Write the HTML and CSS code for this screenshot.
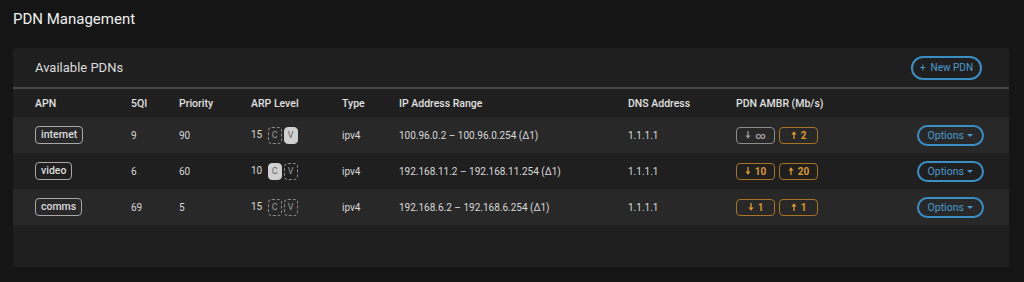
FILE: index.html
```html
<!DOCTYPE html>
<html lang="en">
<head>
    <meta charset="UTF-8">
    <meta name="viewport" content="width=device-width, initial-scale=1.0">
    <title>PDN Management</title>
    <link rel="stylesheet" href="styles.css">
</head>
<body>
    <h1 class="page-title">PDN Management</h1>

    <div class="card">
        <div class="card-header">
            <h2>Available PDNs</h2>
            <button class="btn-outline">+&nbsp; New PDN</button>
        </div>

        <table class="pdn-table">
            <thead>
                <tr>
                    <th class="col-apn">APN</th>
                    <th class="col-qi">5QI</th>
                    <th class="col-prio">Priority</th>
                    <th class="col-arp">ARP Level</th>
                    <th class="col-type">Type</th>
                    <th class="col-ip">IP Address Range</th>
                    <th class="col-dns">DNS Address</th>
                    <th class="col-ambr">PDN AMBR (Mb/s)</th>
                    <th></th>
                </tr>
            </thead>
            <tbody>
                <tr>
                    <td><span class="apn">internet</span></td>
                    <td>9</td>
                    <td>90</td>
                    <td>
                        <span class="arp">15</span>
                        <span class="flag">C</span><span class="flag on">V</span>
                    </td>
                    <td>ipv4</td>
                    <td>100.96.0.2 – 100.96.0.254 (Δ1)</td>
                    <td>1.1.1.1</td>
                    <td>
                        <span class="rate"><svg class="arrow" viewBox="0 0 6 8"><path d="M3 0v5"/><polygon points="0.4,4.4 5.6,4.4 3,7.8"/></svg>∞</span><span class="rate set"><svg class="arrow" viewBox="0 0 6 8"><path d="M3 8V3"/><polygon points="0.4,3.6 5.6,3.6 3,0.2"/></svg>2</span>
                    </td>
                    <td class="actions"><button class="btn-outline small">Options <span class="caret"></span></button></td>
                </tr>
                <tr>
                    <td><span class="apn">video</span></td>
                    <td>6</td>
                    <td>60</td>
                    <td>
                        <span class="arp">10</span>
                        <span class="flag on">C</span><span class="flag">V</span>
                    </td>
                    <td>ipv4</td>
                    <td>192.168.11.2 – 192.168.11.254 (Δ1)</td>
                    <td>1.1.1.1</td>
                    <td>
                        <span class="rate set"><svg class="arrow" viewBox="0 0 6 8"><path d="M3 0v5"/><polygon points="0.4,4.4 5.6,4.4 3,7.8"/></svg>10</span><span class="rate set"><svg class="arrow" viewBox="0 0 6 8"><path d="M3 8V3"/><polygon points="0.4,3.6 5.6,3.6 3,0.2"/></svg>20</span>
                    </td>
                    <td class="actions"><button class="btn-outline small">Options <span class="caret"></span></button></td>
                </tr>
                <tr>
                    <td><span class="apn">comms</span></td>
                    <td>69</td>
                    <td>5</td>
                    <td>
                        <span class="arp">15</span>
                        <span class="flag">C</span><span class="flag">V</span>
                    </td>
                    <td>ipv4</td>
                    <td>192.168.6.2 – 192.168.6.254 (Δ1)</td>
                    <td>1.1.1.1</td>
                    <td>
                        <span class="rate set"><svg class="arrow" viewBox="0 0 6 8"><path d="M3 0v5"/><polygon points="0.4,4.4 5.6,4.4 3,7.8"/></svg>1</span><span class="rate set"><svg class="arrow" viewBox="0 0 6 8"><path d="M3 8V3"/><polygon points="0.4,3.6 5.6,3.6 3,0.2"/></svg>1</span>
                    </td>
                    <td class="actions"><button class="btn-outline small">Options <span class="caret"></span></button></td>
                </tr>
            </tbody>
        </table>
    </div>
</body>
</html>
```

FILE: styles.css
```css
body {
    font-family: Roboto, "Noto Sans", sans-serif;
    margin: 0;
    padding: 0 15px 0 13px;
    background-color: #151515;
    color: #e4e4e4;
}
.page-title {
    font-size: 15px;
    font-weight: 400;
    margin: 0;
    padding: 10px 0 0;
    height: 48px;
    box-sizing: border-box;
    color: #f0f0f0;
}
.card {
    background: #1f1f1f;
    border-radius: 3px;
    height: 219px;
}
.card-header {
    display: flex;
    align-items: center;
    justify-content: space-between;
    height: 39px;
    padding: 0 27px 0 22px;
    border-bottom: 2px solid #474747;
}
.card-header h2 {
    font-size: 13px;
    font-weight: 400;
    margin: 0;
    color: #dcdcdc;
}
.btn-outline {
    font-family: inherit;
    background: transparent;
    border: 2px solid #3b8ec4;
    color: #4c9bd0;
    border-radius: 12px;
    height: 24px;
    width: 71px;
    padding: 0;
    font-size: 10px;
    cursor: pointer;
}
.btn-outline.small {
    height: 21px;
    width: 67px;
    font-size: 10.5px;
}
.caret {
    display: inline-block;
    width: 0;
    height: 0;
    border-left: 3px solid transparent;
    border-right: 3px solid transparent;
    border-top: 3px solid #4c9bd0;
    vertical-align: 2px;
    margin-left: 1px;
}
.pdn-table {
    width: 100%;
    border-collapse: collapse;
    font-size: 10px;
}
.pdn-table th {
    text-align: left;
    font-size: 10.5px;
    font-weight: 500;
    color: #e0e0e0;
    height: 28px;
    padding: 0;
}
.pdn-table td {
    height: 36px;
    padding: 0;
    color: #d8d8d8;
}
.pdn-table tbody tr:nth-child(odd) {
    background: #282828;
}
.pdn-table th:first-child,
.pdn-table td:first-child {
    padding-left: 22px;
}
.col-apn { width: 96px; }
.col-qi { width: 48px; }
.col-prio { width: 72px; }
.col-arp { width: 91px; }
.col-type { width: 57px; }
.col-ip { width: 229px; }
.col-dns { width: 108px; }
.col-ambr { width: 150px; }
.actions {
    text-align: right;
    padding-right: 25px !important;
}
.apn {
    display: inline-block;
    border: 1px solid #a8a8a8;
    border-radius: 4px;
    padding: 0 5px;
    line-height: 16px;
    font-size: 10.5px;
    font-weight: 500;
    color: #dcdcdc;
}
.arp {
    margin-right: 3px;
}
.flag {
    display: inline-block;
    width: 14px;
    height: 17px;
    box-sizing: border-box;
    border: 1px dashed #8a8a8a;
    border-radius: 4px;
    text-align: center;
    line-height: 15px;
    font-size: 9px;
    color: #9a9a9a;
    margin-right: 2px;
    vertical-align: middle;
}
.flag.on {
    background: #d0d0d0;
    border: 1px solid #d0d0d0;
    color: #666;
}
.rate {
    display: inline-flex;
    align-items: center;
    justify-content: center;
    gap: 4px;
    width: 39px;
    height: 17px;
    box-sizing: border-box;
    border: 1px solid #8c8c8c;
    border-radius: 4px;
    font-size: 10px;
    font-weight: 700;
    color: #9c9c9c;
    margin-right: 4px;
    vertical-align: middle;
}
.rate.set {
    border-color: #a87324;
    color: #dd9a2c;
}
.arrow {
    width: 6px;
    height: 8px;
    fill: currentColor;
    stroke: currentColor;
    stroke-width: 1.3;
}
.arrow polygon {
    stroke: none;
}
```
